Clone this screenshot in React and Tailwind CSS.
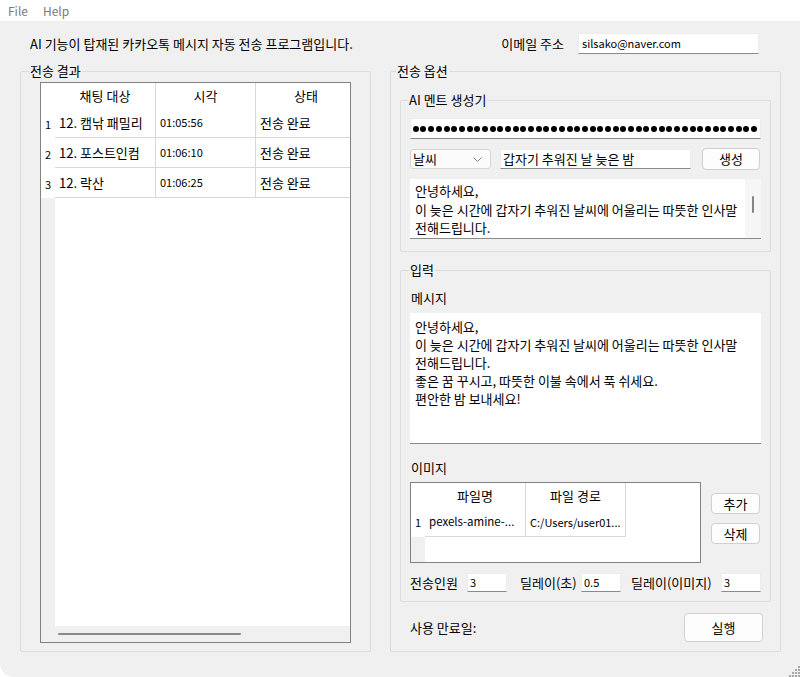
import React from 'react'

const resultRows = [
  { no: 1, target: '12. 캠낚 패밀리', time: '01:05:56', status: '전송 완료' },
  { no: 2, target: '12. 포스트인컴', time: '01:06:10', status: '전송 완료' },
  { no: 3, target: '12. 락산', time: '01:06:25', status: '전송 완료' },
]

const aiLines = ['안녕하세요,', '이 늦은 시간에 갑자기 추워진 날씨에 어울리는 따뜻한 인사말', '전해드립니다.']

const messageLines = [
  '안녕하세요,',
  '이 늦은 시간에 갑자기 추워진 날씨에 어울리는 따뜻한 인사말',
  '전해드립니다.',
  '좋은 꿈 꾸시고, 따뜻한 이불 속에서 푹 쉬세요.',
  '편안한 밤 보내세요!',
]

function Field({ className = '', children }) {
  return (
    <div className={`shrink-0 bg-white border border-[#ececec] border-b-[#8a8a8a] flex items-center overflow-hidden whitespace-nowrap ${className}`}>
      {children}
    </div>
  )
}

function Button({ className = '', children }) {
  return (
    <div className={`shrink-0 bg-[#fdfdfd] border border-[#d0d0d0] rounded-[4px] flex items-center justify-center ${className}`}>
      {children}
    </div>
  )
}

function Group({ label, legendClass = 'ml-[8px]', className = '', children }) {
  return (
    <fieldset className={`min-w-0 shrink-0 border border-[#dcdcdc] rounded-[2px] ${className}`}>
      <legend className={`px-[1px] leading-[16px] ${legendClass}`}>{label}</legend>
      {children}
    </fieldset>
  )
}

function ResultTable() {
  return (
    <div className="w-[311px] h-[561px] border border-[#828282] bg-white flex flex-col overflow-hidden">
      <div className="flex h-[25px] shrink-0">
        <div className="w-[14px] shrink-0" />
        <div className="w-[101px] shrink-0 border-r border-[#d8d8d8] flex items-center justify-center">채팅 대상</div>
        <div className="w-[100px] shrink-0 border-r border-[#d8d8d8] flex items-center justify-center">시각</div>
        <div className="w-[100px] shrink-0 flex items-center justify-center">상태</div>
      </div>
      {resultRows.map((r) => (
        <div key={r.no} className="flex h-[30px] shrink-0">
          <div className="w-[14px] shrink-0 flex items-center justify-center pt-[2px] text-[11px]">{r.no}</div>
          <div className="w-[101px] shrink-0 border-r border-b border-[#d8d8d8] pl-[4px] flex items-center">{r.target}</div>
          <div className="w-[100px] shrink-0 border-r border-b border-[#d8d8d8] pl-[4px] flex items-center text-[11px]">{r.time}</div>
          <div className="w-[100px] shrink-0 border-b border-[#d8d8d8] pl-[4px] flex items-center">{r.status}</div>
        </div>
      ))}
      <div className="flex-1 flex">
        <div className="w-[14px] bg-[#f0f0f0]" />
        <div className="flex-1" />
      </div>
      <div className="h-[16px] shrink-0 bg-[#f0f0f0] pt-[7px] pl-[17px]">
        <div className="w-[183px] h-[2px] rounded-full bg-[#8a8a8a]" />
      </div>
    </div>
  )
}

function ImageTable() {
  return (
    <div className="w-[291px] h-[81px] shrink-0 border border-[#828282] bg-white flex flex-col overflow-hidden">
      <div className="flex h-[25px] shrink-0">
        <div className="w-[14px] shrink-0" />
        <div className="w-[101px] shrink-0 border-r border-[#d8d8d8] flex items-center justify-center">파일명</div>
        <div className="w-[100px] shrink-0 border-r border-[#d8d8d8] flex items-center justify-center">파일 경로</div>
      </div>
      <div className="flex h-[29px] shrink-0">
        <div className="w-[14px] shrink-0 flex items-center justify-center text-[11px]">1</div>
        <div className="w-[101px] shrink-0 border-r border-b border-[#d8d8d8] pl-[4px] flex items-center text-[11.5px]">pexels-amine-...</div>
        <div className="w-[100px] shrink-0 border-r border-b border-[#d8d8d8] pl-[4px] flex items-center text-[11px]">C:/Users/user01...</div>
      </div>
      <div className="flex-1 flex">
        <div className="w-[14px] bg-[#f0f0f0]" />
      </div>
    </div>
  )
}

function Chevron() {
  return (
    <svg width="9" height="5" viewBox="0 0 9 5" fill="none">
      <path d="M0.5 0.5 L4.5 4.5 L8.5 0.5" stroke="#808080" strokeWidth="1" />
    </svg>
  )
}

function SizeGrip() {
  const dots = [[9, 1], [6, 4], [9, 4], [3, 7], [6, 7], [9, 7], [0, 10], [3, 10], [6, 10], [9, 10]]
  return (
    <svg width="11" height="12" viewBox="0 0 11 12">
      {dots.map(([x, y]) => (
        <rect key={`${x}-${y}`} x={x} y={y} width="2" height="2" fill="#a8a8a8" />
      ))}
    </svg>
  )
}

export default function App() {
  return (
    <div className="w-[800px] h-[677px] bg-[#f0f0f0] flex flex-col overflow-hidden rounded-bl-[14px] text-[13px] text-black font-['Noto_Sans_CJK_KR','Noto_Sans',sans-serif]">
      {/* menu */}
      <div className="h-[21px] shrink-0 bg-white flex items-center gap-[15px] pl-[8px] text-[12px] text-[#7b7b7b]">
        <span>File</span>
        <span>Help</span>
      </div>

      <div className="px-[20px] pt-[12px]">
        <div className="flex items-center h-[21px]">
          <span className="pl-[10px]">AI 기능이 탑재된 카카오톡 메시지 자동 전송 프로그램입니다.</span>
          <span className="ml-auto">이메일 주소</span>
          <Field className="ml-[14px] mr-[21px] w-[181px] h-[21px] pl-[3px] text-[11px]">silsako@naver.com</Field>
        </div>

        <div className="mt-[9px] flex gap-[19px]">
          {/* send results */}
          <Group label="전송 결과" className="w-[351px] h-[589px]">
            <div className="pl-[19px] pt-[3px]">
              <ResultTable />
            </div>
          </Group>

          {/* send options */}
          <Group label="전송 옵션" legendClass="ml-[5px]" className="w-[391px] h-[589px]">
            <div className="px-[9px] pt-[13px]">
              <Group label="AI 멘트 생성기" legendClass="ml-[7px]" className="w-[371px]">
                <div className="px-[9px] pt-[10px] pb-[12px]">
                  <Field className="w-[351px] h-[21px] justify-end gap-[1.7px] pr-[3px]">
                    {Array.from({ length: 46 }).map((_, i) => (
                      <span key={i} className="w-[6px] h-[6px] shrink-0 rounded-full bg-black" />
                    ))}
                  </Field>
                  <div className="mt-[9px] flex items-center h-[22px]">
                    <div className="w-[81px] h-[20px] shrink-0 bg-[#fbfbfb] border border-[#d5d5d5] rounded-[3px] flex items-center pl-[2px] pr-[8px]">
                      <span>날씨</span>
                      <span className="ml-auto flex">
                        <Chevron />
                      </span>
                    </div>
                    <Field className="ml-[9px] w-[191px] h-[20px] pl-[2px]">갑자기 추워진 날 늦은 밤</Field>
                    <Button className="ml-auto mr-[1px] w-[58px] h-[22px]">생성</Button>
                  </div>
                  <div className="mt-[9px] w-[351px] h-[60px] bg-white border-b border-[#8a8a8a] flex">
                    <div className="flex-1 min-w-0 pl-[5px] pt-[3px] leading-[18.5px] overflow-hidden whitespace-nowrap">
                      {aiLines.map((l) => (
                        <div key={l}>{l}</div>
                      ))}
                    </div>
                    <div className="w-[16px] shrink-0 bg-[#f6f6f6] flex justify-center pt-[17px]">
                      <div className="w-[2px] h-[17px] rounded-full bg-[#858585]" />
                    </div>
                  </div>
                </div>
              </Group>

              <Group label="입력" className="w-[371px] mt-[10px]">
                <div className="px-[9px] pb-[9px]">
                  <div className="mt-[12px] leading-[16px] pl-[1px]">메시지</div>
                  <div className="mt-[7px] w-[351px] h-[131px] bg-white border-b border-[#8a8a8a] pl-[5px] pt-[5px] leading-[18px] whitespace-nowrap overflow-hidden">
                    {messageLines.map((l) => (
                      <div key={l}>{l}</div>
                    ))}
                  </div>
                  <div className="mt-[16px] leading-[16px] pl-[1px]">이미지</div>
                  <div className="mt-[6px] flex w-[351px]">
                    <ImageTable />
                    <div className="ml-auto mr-[1px] pt-[11px] flex flex-col gap-[9px]">
                      <Button className="w-[49px] h-[21px]">추가</Button>
                      <Button className="w-[49px] h-[21px]">삭제</Button>
                    </div>
                  </div>
                  <div className="mt-[10px] flex items-center h-[19px] w-[351px]">
                    <span className="w-[57px] shrink-0 whitespace-nowrap">전송인원</span>
                    <Field className="w-[40px] h-[19px] pl-[2px] text-[11px]">3</Field>
                    <span className="w-[74px] shrink-0 pl-[13px] whitespace-nowrap">딜레이(초)</span>
                    <Field className="w-[40px] h-[19px] pl-[2px] text-[11px]">0.5</Field>
                    <span className="w-[100px] shrink-0 pl-[10px] whitespace-nowrap">딜레이(이미지)</span>
                    <Field className="w-[40px] h-[19px] pl-[2px] text-[11px]">3</Field>
                  </div>
                </div>
              </Group>

              <div className="mt-[11px] flex items-center pl-[10px] pr-[8px]">
                <span>사용 만료일:</span>
                <Button className="ml-auto w-[79px] h-[29px]">실행</Button>
              </div>
            </div>
          </Group>
        </div>
      </div>

      <div className="flex-1 flex justify-end items-end">
        <SizeGrip />
      </div>
    </div>
  )
}
